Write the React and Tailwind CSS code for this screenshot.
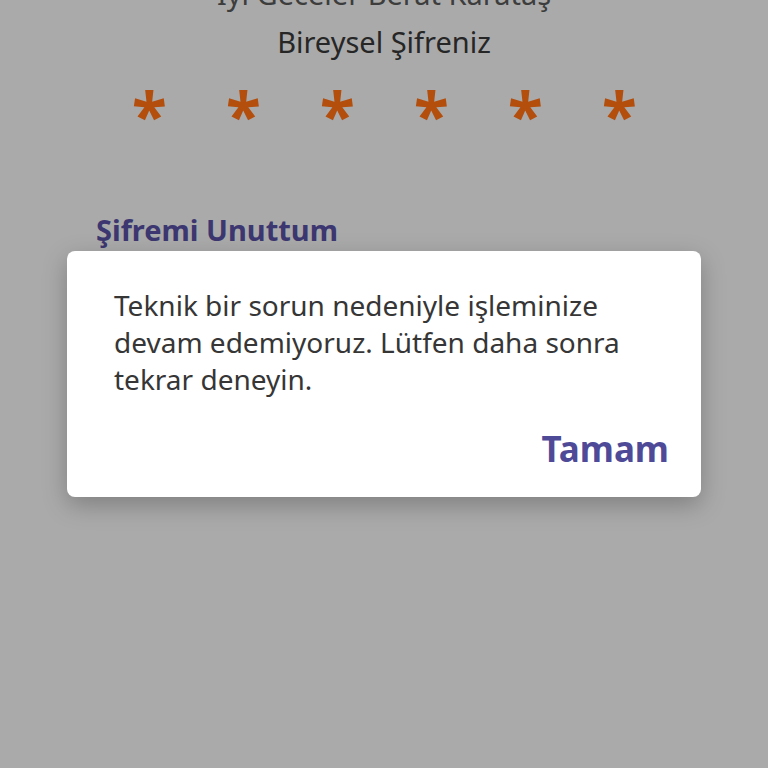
export default function App() {
  const stars = [0, 1, 2, 3, 4, 5]
  return (
    <div
      className="relative h-[768px] w-[768px] overflow-hidden bg-[#aaaaaa]"
      style={{ fontFamily: '"Noto Sans", "DejaVu Sans", sans-serif' }}
    >
      <div className="flex flex-col items-center">
        <p className="-mt-[24px] text-[29px] leading-[36px] text-[#3d3d3d]">İyi Geceler Berat Karataş</p>
        <p className="mt-[10px] text-[29px] leading-[40px] text-[#262626]">Bireysel Şifreniz</p>
        <div className="mt-[28px] flex gap-[60px]">
          {stars.map((i) => (
            <span key={i} className="w-[34px] text-center text-[64px] font-bold leading-[50px] text-[#b34e0d]">
              *
            </span>
          ))}
        </div>
      </div>

      <p className="ml-[96px] mt-[70px] text-[29px] font-bold leading-[40px] text-[#3c3770]">Şifremi Unuttum</p>

      <div className="absolute left-[67px] top-[251px] w-[634px] rounded-[8px] bg-white pb-[26px] pl-[47px] pr-[32px] pt-[36px] shadow-[0_8px_24px_rgba(0,0,0,0.25)]">
        <p className="max-w-[530px] text-[28px] leading-[37px] text-[#363636]">
          Teknik bir sorun nedeniyle işleminize devam edemiyoruz. Lütfen daha sonra tekrar deneyin.
        </p>
        <div className="mt-[29px] flex justify-end">
          <button className="text-[35px] font-bold leading-[44px] text-[#4f4a98]">Tamam</button>
        </div>
      </div>
    </div>
  )
}
